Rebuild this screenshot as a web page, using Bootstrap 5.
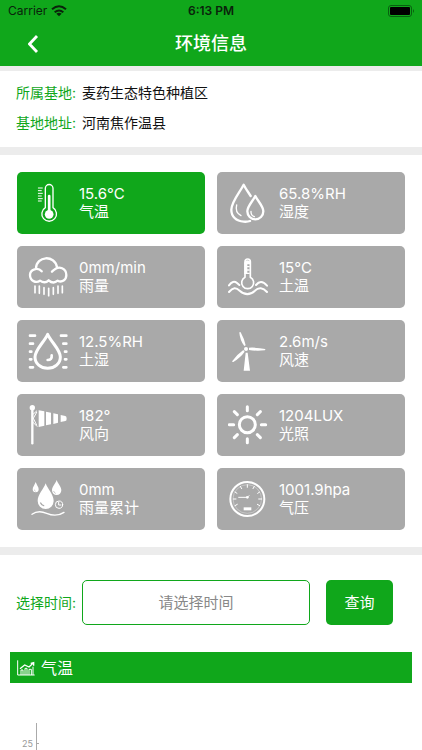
<!DOCTYPE html>
<html lang="zh-CN">
<head>
<meta charset="utf-8">
<meta name="viewport" content="width=device-width, initial-scale=1">
<title>环境信息</title>
<link href="https://cdn.jsdelivr.net/npm/bootstrap@5.3.0/dist/css/bootstrap.min.css" rel="stylesheet">
<style>
:root { --env-green: #10a71b; --env-gray: #a9a9a9; }
body { font-family: Inter, "Noto Sans CJK SC", sans-serif; font-size: 14px; line-height: 18px; color: #111; overflow-x: hidden; }
.env-green-bg { background: var(--env-green); }
.env-green-text { color: var(--env-green); }
.status-bar { height: 22px; font-size: 12px; color: #0a230b; display: grid; grid-template-columns: 1fr auto 1fr; }
.title-bar { height: 44px; display: grid; grid-template-columns: 1fr auto 1fr; }
.title-bar h1 { font-size: 18px; line-height: 24px; }
.band { height: 8px; background: #ececec; }
.band-top { height: 5px; }
.info { padding: 10px 16px 12px; }
.info dt, .info dd { line-height: 24px; }
.info-list { row-gap: 6px; }
.info-pair { column-gap: 6px; }
.tiles { padding: 17px; }
.tiles .row { --bs-gutter-x: 12px; --bs-gutter-y: 12px; }
.tile { background: var(--env-gray); border-radius: 5px; height: 62px; padding: 0 11px; gap: 11px; font-size: 15px; line-height: 18px; }
.tile.active { background: var(--env-green); }
.tile svg { width: 40px; height: 40px; flex: none; fill: none; stroke: #fff; stroke-width: 7; stroke-linecap: round; stroke-linejoin: round; }
.tile svg .solid { fill: #fff; stroke: none; }
.query { padding: 25px 29px 27px 16px; }
.query-input { height: 45px; border: 1px solid var(--env-green); border-radius: 5px; font-size: 15px; margin-left: 6px; margin-right: 16px; min-width: 0; }
.query-input::placeholder { color: #888; opacity: 1; }
.query-btn { height: 45px; width: 67px; flex: none; border-radius: 5px; font-size: 15px; }
.chart-head { margin: 0 10px; height: 31px; padding: 0 7px; gap: 6px; }
.chart-head h2 { font-size: 16px; line-height: 20px; }
.chart { margin: 40px 10px 0 20px; }
.chart text { font-size: 9px; fill: #999; }
</style>
<script src="https://cdn.jsdelivr.net/npm/bootstrap@5.3.0/dist/js/bootstrap.bundle.min.js"></script>
</head>
<body>
<header class="env-green-bg">
  <div class="status-bar align-items-center px-2">
    <div class="d-flex align-items-center gap-1"><span>Carrier</span>
      <svg width="16" height="12" viewBox="0 0 48 34" fill="none" stroke="#0a230b" stroke-width="6" aria-hidden="true"><path d="M3 12Q24-6 45 12M11 21q13-11 26 0"/><path d="M16 25q8-6 16 0l-8 8z" fill="#0a230b" stroke="none"/></svg>
    </div>
    <span class="fw-semibold">6:13 PM</span>
    <div class="d-flex justify-content-end">
      <svg width="26" height="12" viewBox="0 0 26 12" aria-hidden="true"><rect x=".5" y=".5" width="23" height="11" rx="2.5" fill="none" stroke="#086010"/><rect x="2" y="2" width="20" height="8" rx="1" fill="#000"/><path d="M25 4q2 2 0 4z" fill="#086010"/></svg>
    </div>
  </div>
  <div class="title-bar align-items-center text-white">
    <a href="#" class="ps-4 text-white" aria-label="返回"><svg class="ms-1" width="14" height="20" viewBox="0 0 14 20" fill="none" stroke="#fff" stroke-width="2.8" aria-hidden="true"><path d="M9 2 1.500 10 9 18"/></svg></a>
    <h1 class="m-0 fw-medium">环境信息</h1>
  </div>
</header>
<div class="band band-top"></div>
<main>
  <section class="info">
    <dl class="info-list d-flex flex-column m-0">
      <div class="info-pair d-flex"><dt class="fw-normal env-green-text">所属基地:</dt><dd class="m-0">麦药生态特色种植区</dd></div>
      <div class="info-pair d-flex"><dt class="fw-normal env-green-text">基地地址:</dt><dd class="m-0">河南焦作温县</dd></div>
    </dl>
  </section>
  <div class="band"></div>
  <section class="tiles">
    <div class="row row-cols-2">
      <div class="col"><button type="button" class="tile active border-0 w-100 d-flex align-items-center text-start text-white">
        <svg viewBox="0 0 120 120" aria-hidden="true"><g stroke-width="4"><path d="M52 74V16a11 11 0 0 1 23 0v58a22 22 0 1 1-23 0z"/><path d="M31 15h12M31 23h9M31 31h12M31 39h9M31 47h12M31 54h9" stroke-width="3"/></g><path d="M63.500 39v50" stroke-width="8"/><circle class="solid" cx="63.500" cy="94" r="13"/></svg>
        <span>15.6°C<br>气温</span></button></div>
      <div class="col"><button type="button" class="tile border-0 w-100 d-flex align-items-center text-start text-white">
        <svg viewBox="0 0 120 120" aria-hidden="true"><path d="M66 114Q58 117 47 116C24 115 10 100 10 80 10 57 35 28 47 5c6 12 14 23 21 34"/><path d="M82 39c8 16 24 31 24 46a24 24 0 0 1-48 0c0-15 16-30 24-46z"/><path d="M26 66q-6 22 13 32M69 85q-1 12 10 16" stroke-width="4"/></svg>
        <span>65.8%RH<br>湿度</span></button></div>
      <div class="col"><button type="button" class="tile border-0 w-100 d-flex align-items-center text-start text-white">
        <svg viewBox="0 0 120 120" aria-hidden="true"><path d="M41 43C30 30 6 36 6 54c0 18 18 25 30 17 10 7 19 6 26-1 9 8 19 8 27 1 13 7 26-2 26-17 0-20-22-29-36-16-4 3-7 6-7 6M24 34C25-4 80-7 87 30"/><path d="M21 87v20M34 87v22M48 92v20M62 94v22M76 92v20M90 87v22M103 87v20" stroke-width="5"/></svg>
        <span>0mm/min<br>雨量</span></button></div>
      <div class="col"><button type="button" class="tile border-0 w-100 d-flex align-items-center text-start text-white">
        <svg viewBox="0 0 120 120" aria-hidden="true"><path d="M51 61V14a8 8 0 0 1 16 0v47a18 18 0 1 1-16 0z" stroke-width="5"/><path class="solid" d="M49 17a10 10 0 0 1 19 0v5H58v5h7v4h-7v6h7v4h-7v6h7v4H49z"/><path d="M3 85q12-17 24-7l7 6M84 84c10-12 20-12 33 2M3 105c12-14 21-14 32-4q23 21 46 0c11-11 24-9 36 4" stroke-width="6"/></svg>
        <span>15°C<br>土温</span></button></div>
      <div class="col"><button type="button" class="tile border-0 w-100 d-flex align-items-center text-start text-white">
        <svg viewBox="0 0 120 120" aria-hidden="true"><path d="M59 10C70 34 97 56 97 78c0 20-17 34-38 34S21 98 21 78c0-22 27-44 38-68z" stroke-width="9"/><path d="M71 73c1 9-3 14-12 14" stroke-width="8"/><path d="M6 14h15M6 38h9M6 62h4M6 85h4M6 109h9M99 14h16M106 38h9M111 62h4M111 85h4M106 109h9" stroke-width="8"/></svg>
        <span>12.5%RH<br>土湿</span></button></div>
      <div class="col"><button type="button" class="tile border-0 w-100 d-flex align-items-center text-start text-white">
        <svg viewBox="0 0 120 120" aria-hidden="true"><g class="solid"><circle cx="54" cy="54" r="6"/><path d="M49 45Q36 28 34 5q1-4 4-1 11 20 15 39zM63 50q28-1 48 4 3 3-1 4-24 3-47-1zM46 57l4 5Q38 79 16 93q-4 1-3-3 12-18 33-33zM53 65h6l7 54H47z"/></g></svg>
        <span>2.6m/s<br>风速</span></button></div>
      <div class="col"><button type="button" class="tile border-0 w-100 d-flex align-items-center text-start text-white">
        <svg viewBox="0 0 120 120" aria-hidden="true"><path d="M13 10v105"/><circle class="solid" cx="13" cy="8" r="8"/><path d="M15 28 26 18M15 52l12 12M16 40l10-18M16 40l10 20" stroke-width="3"/><path class="solid" d="M32 16l17 3v43l-17 4zM54 20l15 3v35l-15 3zM76 25l14 3v25l-14 4zM98 30l14 3q4 1 4 8t-4 7l-14 3z"/></svg>
        <span>182°<br>风向</span></button></div>
      <div class="col"><button type="button" class="tile border-0 w-100 d-flex align-items-center text-start text-white">
        <svg viewBox="0 0 120 120" aria-hidden="true"><g stroke-width="9"><circle cx="58" cy="59" r="24"/><path d="M58 5v12M58 101v12M4 59h13M100 59h13M19 20l9 9M88 89l9 9M19 98l9-9M88 29l9-9"/></g></svg>
        <span>1204LUX<br>光照</span></button></div>
      <div class="col"><button type="button" class="tile border-0 w-100 d-flex align-items-center text-start text-white">
        <svg viewBox="0 0 120 120" aria-hidden="true"><g class="solid"><path d="M53 13c6 18 24 33 24 53a24 24 0 0 1-48 0c0-20 18-35 24-53zM23 9c3 9 9 15 9 22a9 9 0 0 1-18 0c0-7 6-13 9-22zM86 3c4 12 14 20 14 31a14 14 0 0 1-28 0c0-11 10-19 14-31z"/></g><path d="M38 72q3 7 9 8" stroke="#a9a9a9" stroke-width="4"/><path d="M77 37q2 5 5 6M19 33l3 3" stroke="#a9a9a9" stroke-width="2"/><circle cx="93" cy="77" r="13" fill="#a9a9a9" stroke="#a9a9a9"/><circle cx="93" cy="77" r="11" stroke-width="3"/><path d="M92 70v8h7" stroke-width="3"/><path d="M12 106c16-12 30-9 44-3s34 9 52-3" stroke-width="4"/></svg>
        <span>0mm<br>雨量累计</span></button></div>
      <div class="col"><button type="button" class="tile border-0 w-100 d-flex align-items-center text-start text-white">
        <svg viewBox="0 0 120 120" aria-hidden="true"><circle cx="58" cy="60" r="51" stroke-width="6"/><circle cx="58" cy="60" r="43" stroke-width="1"/><path d="M21 80l7-4M16 60h8M21 39l6 4M37 22l4 7M58 17v8M79 22l-4 7M95 39l-6 4M100 60h-8M95 80l-7-4" stroke-width="3"/><path d="M32 55h23M58 55l5-5" stroke-width="3"/><circle class="solid" cx="58" cy="55" r="4"/><path class="solid" d="M47 85h23v9H47z"/></svg>
        <span>1001.9hpa<br>气压</span></button></div>
    </div>
  </section>
  <div class="band"></div>
  <form class="query d-flex align-items-center">
    <label for="time" class="env-green-text text-nowrap">选择时间:</label>
    <input id="time" type="text" class="query-input flex-fill text-center bg-white" placeholder="请选择时间">
    <button type="button" class="query-btn env-green-bg border-0 text-white p-0">查询</button>
  </form>
  <section>
    <div class="chart-head env-green-bg text-white d-flex align-items-center">
      <svg width="18" height="16" viewBox="0 0 54 48" fill="none" stroke="#fff" stroke-width="4" aria-hidden="true"><path d="M2 1v44h51M12 45V30h6v15M24 45V25h6v20M36 45V28h7v17M48 45V20" stroke-width="3"/><path d="M9 26l14-11 13 6L49 9M41 10l9-2v9"/></svg>
      <h2 class="m-0 fw-normal">气温</h2>
    </div>
    <div class="chart">
      <svg class="d-block" width="100%" height="27" role="img" aria-label="气温图表"><path d="M16.500 0v27M16 20.500h3" stroke="#aaa" fill="none"/><text x="2" y="24">25</text></svg>
    </div>
  </section>
</main>
</body>
</html>
